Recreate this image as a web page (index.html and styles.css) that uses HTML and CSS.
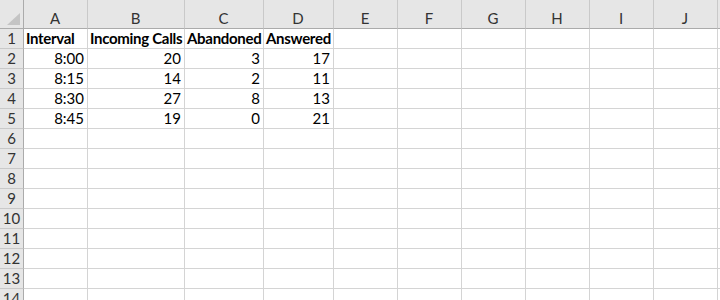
FILE: index.html
```html
<!DOCTYPE html>
<html lang="en">
<head>
  <meta charset="UTF-8">
  <title>Call Intervals</title>
  <link rel="stylesheet" href="styles.css">
</head>
<body>
  <div class="sheet">
    <div class="row head">
      <div class="corner"><span class="tri"></span></div>
      <div>A</div><div>B</div><div>C</div><div>D</div><div>E</div>
      <div>F</div><div>G</div><div>H</div><div>I</div><div>J</div><div></div>
    </div>

    <div class="row">
      <div class="num">1</div>
      <div class="b">Interval</div><div class="b">Incoming Calls</div><div class="b">Abandoned</div><div class="b">Answered</div>
      <div></div><div></div><div></div><div></div><div></div><div></div><div></div>
    </div>
    <div class="row">
      <div class="num">2</div>
      <div class="r">8:00</div><div class="r">20</div><div class="r">3</div><div class="r">17</div>
      <div></div><div></div><div></div><div></div><div></div><div></div><div></div>
    </div>
    <div class="row">
      <div class="num">3</div>
      <div class="r">8:15</div><div class="r">14</div><div class="r">2</div><div class="r">11</div>
      <div></div><div></div><div></div><div></div><div></div><div></div><div></div>
    </div>
    <div class="row">
      <div class="num">4</div>
      <div class="r">8:30</div><div class="r">27</div><div class="r">8</div><div class="r">13</div>
      <div></div><div></div><div></div><div></div><div></div><div></div><div></div>
    </div>
    <div class="row">
      <div class="num">5</div>
      <div class="r">8:45</div><div class="r">19</div><div class="r">0</div><div class="r">21</div>
      <div></div><div></div><div></div><div></div><div></div><div></div><div></div>
    </div>
    <div class="row"><div class="num">6</div><div></div><div></div><div></div><div></div><div></div><div></div><div></div><div></div><div></div><div></div><div></div></div>
    <div class="row"><div class="num">7</div><div></div><div></div><div></div><div></div><div></div><div></div><div></div><div></div><div></div><div></div><div></div></div>
    <div class="row"><div class="num">8</div><div></div><div></div><div></div><div></div><div></div><div></div><div></div><div></div><div></div><div></div><div></div></div>
    <div class="row"><div class="num">9</div><div></div><div></div><div></div><div></div><div></div><div></div><div></div><div></div><div></div><div></div><div></div></div>
    <div class="row"><div class="num">10</div><div></div><div></div><div></div><div></div><div></div><div></div><div></div><div></div><div></div><div></div><div></div></div>
    <div class="row"><div class="num">11</div><div></div><div></div><div></div><div></div><div></div><div></div><div></div><div></div><div></div><div></div><div></div></div>
    <div class="row"><div class="num">12</div><div></div><div></div><div></div><div></div><div></div><div></div><div></div><div></div><div></div><div></div><div></div></div>
    <div class="row"><div class="num">13</div><div></div><div></div><div></div><div></div><div></div><div></div><div></div><div></div><div></div><div></div><div></div></div>
    <div class="row"><div class="num">14</div><div></div><div></div><div></div><div></div><div></div><div></div><div></div><div></div><div></div><div></div><div></div></div>
  </div>
</body>
</html>
```

FILE: styles.css
```css
* {
  margin: 0;
  padding: 0;
  box-sizing: border-box;
}

html, body {
  width: 720px;
  height: 300px;
  overflow: hidden;
  background: #ffffff;
}

body {
  font-family: 'Lato', 'Liberation Sans', sans-serif;
  font-size: 15px;
  color: #000;
}

.sheet {
  width: 800px;
}

.row {
  display: grid;
  grid-template-columns: 24px 64px 97px 79px 70px 64px 64px 64px 64px 64px 64px 64px;
  height: 20px;
}

.row > div {
  border-right: 1px solid #d4d4d4;
  border-bottom: 1px solid #d4d4d4;
  line-height: 19px;
  padding: 0 3px 0 2px;
  white-space: nowrap;
  overflow: hidden;
}

.row > .r {
  text-align: right;
}

.row > .b {
  font-weight: bold;
  letter-spacing: -0.3px;
  overflow: visible;
}

/* column letters */
.row.head {
  height: 29px;
}

.row.head > div {
  background: #e6e6e6;
  border-right-color: #c9c9c9;
  border-bottom-color: #ababab;
  color: #333;
  text-align: center;
  line-height: 18px;
  padding-top: 9px;
}

.row.head > .corner {
  position: relative;
  border-right-color: #ababab;
}

.tri {
  position: absolute;
  right: 3px;
  bottom: 3px;
  width: 0;
  height: 0;
  border-left: 13px solid transparent;
  border-bottom: 12px solid #c4c4c4;
}

/* row numbers */
.row > .num {
  background: #e6e6e6;
  border-right-color: #ababab;
  border-bottom-color: #c9c9c9;
  color: #333;
  text-align: center;
  padding: 0;
}
```
